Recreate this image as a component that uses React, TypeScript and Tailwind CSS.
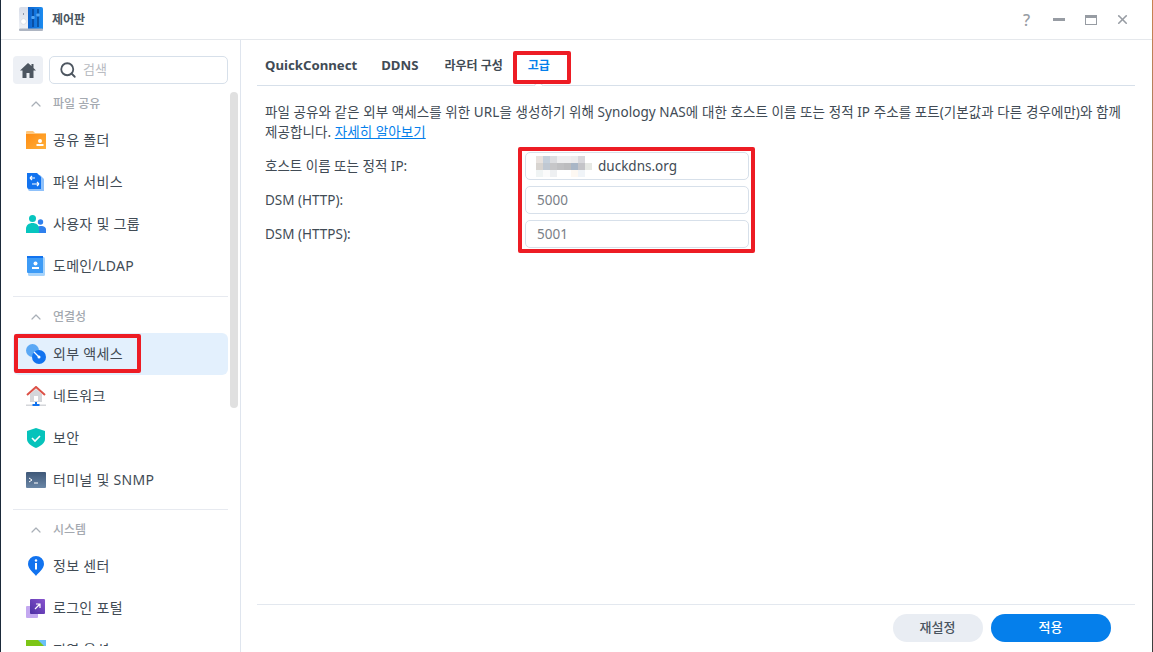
import { Search, ChevronUp, X } from "lucide-react";
import type { ReactNode } from "react";

const FONT = "font-['Noto_Sans','Noto_Sans_CJK_KR',sans-serif]";

// the hostname is pixelated in the picture
const MOSAIC = [
  ["#e8e2de", "#c5d0dc", "#dcdde0", "#eeeeef", "#eeeeef", "#ebebec", "#d8d8dc", "#ffffff"],
  ["#d8d4d0", "#c0c8d2", "#c6c6c8", "#c0c0c2", "#bcbcbe", "#a9b6c6", "#c4c4c8", "#e6e8e4"],
  ["#f0f4f4", "#fbfbfb", "#eef0f2", "#ffffff", "#ffffff", "#fdf8f2", "#f0f4f8", "#ffffff"],
];

function Box({ className }: { className: string }) {
  return <div className={`rounded-[2px] border-4 border-[#ed1c24] ${className}`} />;
}

const FolderIcon = () => (
  <svg width="20" height="18" viewBox="0 0 20 18">
    <defs>
      <linearGradient id="fold" x1="0" y1="0" x2="1" y2="1">
        <stop offset="0" stopColor="#ff8c12" />
        <stop offset="1" stopColor="#ffb03a" />
      </linearGradient>
    </defs>
    <path d="M0 1a1 1 0 0 1 1-1h6l2 2h11v2H0z" fill="#ffc87e" />
    <rect y="3" width="20" height="15" fill="url(#fold)" />
    <circle cx="14" cy="10" r="2" fill="#fff" />
    <rect x="10.500" y="13" width="7" height="2" fill="#fff" />
  </svg>
);

const FileServiceIcon = () => (
  <svg width="20" height="20" viewBox="0 0 20 20">
    <path d="M2 3h12l4 4v12H4a2 2 0 0 1-2-2z" fill="#8fc1fa" />
    <path d="M1 1h10l4 4v12H3a2 2 0 0 1-2-2z" fill="#1273ef" />
    <path d="M9 6H4M4 6l2-2M4 6l2 2M6 12h7M13 12l-2-2M13 12l-2 2" stroke="#fff" strokeWidth="1.200" fill="none" />
  </svg>
);

const UsersIcon = () => (
  <svg width="20" height="18" viewBox="0 0 20 18">
    <circle cx="14.500" cy="7" r="2.700" fill="#2f80ed" />
    <path d="M10 18v-3c0-3 2-4 5-4s5 1 5 4v3z" fill="#2f80ed" />
    <circle cx="6.500" cy="3.500" r="3.500" fill="#07c5bf" />
    <path d="M0 18v-4c0-4 3-6 6.500-6s6.500 2 6.500 6v4z" fill="#07c5bf" />
  </svg>
);

const DomainIcon = () => (
  <svg width="18" height="20" viewBox="0 0 18 20">
    <rect x="1" y="1" width="17" height="19" rx="1.500" fill="#a6d3fb" />
    <path d="M0 1a1 1 0 0 1 1-1h15v17H1a1 1 0 0 1-1-1z" fill="#3d9bf6" />
    <rect y="0" width="16" height="2" fill="#1273ef" />
    <circle cx="8.500" cy="7.500" r="2" fill="#fff" />
    <rect x="5" y="11" width="7" height="2" fill="#fff" />
  </svg>
);

const ExternalIcon = () => (
  <svg width="20" height="20" viewBox="0 0 20 20">
    <circle cx="6.500" cy="6.500" r="6.500" fill="#5aa8f5" />
    <circle cx="13" cy="13" r="7" fill="#1273ef" />
    <path d="M8 8l5 5" stroke="#fff" strokeWidth="1.300" />
    <circle cx="13" cy="13" r="1.500" fill="#fff" />
  </svg>
);

const NetworkIcon = () => (
  <svg width="20" height="21" viewBox="0 0 20 21">
    <path d="M4 8l6-5 6 5v8H4z" fill="#d4d6da" />
    <path d="M1 9l9-8 9 8" stroke="#dc5147" strokeWidth="2" fill="none" />
    <rect x="8" y="10" width="4" height="5" fill="#fff" />
    <rect x="0" y="18.500" width="20" height="1.500" fill="#d4d6da" />
    <rect x="9" y="16" width="2" height="3" fill="#1273ef" />
    <rect x="6.500" y="18" width="7" height="2" fill="#1273ef" />
  </svg>
);

const ShieldIcon = () => (
  <svg width="18" height="20" viewBox="0 0 18 20">
    <path d="M9 0l9 3v8c0 4-4 7-9 9-5-2-9-5-9-9V3z" fill="#06c3bb" />
    <path d="M5 10l3 3 5-5" stroke="#fff" strokeWidth="1.600" fill="none" />
  </svg>
);

const TerminalIcon = () => (
  <svg width="20" height="16" viewBox="0 0 20 16">
    <defs>
      <linearGradient id="term" x1="0" y1="0" x2="0" y2="1">
        <stop offset="0" stopColor="#3f5878" />
        <stop offset="1" stopColor="#6a86a6" />
      </linearGradient>
    </defs>
    <rect width="20" height="16" rx="1" fill="url(#term)" />
    <path d="M3 6l3 2-3 2M8 11h4" stroke="#fff" strokeWidth="1" fill="none" />
  </svg>
);

const InfoIcon = () => (
  <svg width="16" height="20" viewBox="0 0 16 20">
    <path d="M8 20C6 17 0 13 0 8a8 8 0 0 1 16 0c0 5-6 9-8 12z" fill="#1273ef" />
    <circle cx="8" cy="4.500" r="1.200" fill="#fff" />
    <rect x="7" y="7" width="2" height="6.500" fill="#fff" />
  </svg>
);

const PortalIcon = () => (
  <svg width="20" height="19" viewBox="0 0 20 19">
    <defs>
      <linearGradient id="portal" x1="0" y1="1" x2="1" y2="0">
        <stop offset="0" stopColor="#4b2ea3" />
        <stop offset="1" stopColor="#8a55cf" />
      </linearGradient>
    </defs>
    <rect x="0" y="7" width="12" height="12" rx="1" fill="#c3a8f0" />
    <rect x="4" y="0" width="15" height="15" rx="1" fill="url(#portal)" />
    <path d="M9 10l5-5M10 5h4v4" stroke="#fff" strokeWidth="1.200" fill="none" />
  </svg>
);

const RegionIcon = () => (
  <svg width="20" height="20" viewBox="0 0 20 20">
    <rect width="20" height="20" fill="#7cc516" />
    <path d="M12 0h8v8z" fill="#6cc0f7" />
  </svg>
);

const ControlPanelIcon = () => (
  <svg className="mb-[2px]" width="24" height="24" viewBox="0 0 24 24">
    <defs>
      <linearGradient id="cpBlue" x1="0" y1="0" x2="1" y2="0">
        <stop offset="0" stopColor="#0b63cf" />
        <stop offset="1" stopColor="#1c8cf0" />
      </linearGradient>
      <linearGradient id="cpGray" x1="0" y1="0" x2="0" y2="1">
        <stop offset="0" stopColor="#d8dde9" />
        <stop offset="1" stopColor="#f0f2f6" />
      </linearGradient>
    </defs>
    <rect width="24" height="22" rx="2" fill="url(#cpGray)" />
    <path d="M9 0h13a2 2 0 0 1 2 2v20H9z" fill="url(#cpBlue)" />
    <rect y="21.500" width="24" height="2.500" rx="1" fill="#aeb5c2" />
    <circle cx="4.500" cy="14.500" r="2.800" fill="#fff" stroke="#c6ccd6" strokeWidth="0.500" />
    <rect x="4" y="6" width="1" height="2" fill="#8f98a8" />
    <path d="M14 2v18M19 2v18" stroke="#063a80" strokeWidth="1.200" />
    <rect x="12.300" y="9" width="3.400" height="3" rx="1" fill="#55a6f2" />
    <rect x="17.300" y="6.500" width="3.400" height="3" rx="1" fill="#55a6f2" />
  </svg>
);

function NavItem({ icon, label, active }: { icon: ReactNode; label: string; active?: boolean }) {
  return (
    <div className={`flex h-[42px] shrink-0 items-center rounded-[6px] pl-[13px] ${active ? "bg-[#e3f0fd]" : ""}`}>
      <span className="flex w-5 justify-center">{icon}</span>
      <span className="ml-[7px] pb-[2px] text-[14px] tracking-[0.3px] text-[#414b55]">{label}</span>
    </div>
  );
}

function SectionTitle({ label }: { label: string }) {
  return (
    <div className="flex h-[20px] items-center pl-[15px]">
      <ChevronUp size={16} strokeWidth={1.8} className="text-[#a9afb7]" />
      <span className="ml-[9px] text-[12px] font-medium text-[#a4a9b0]">{label}</span>
    </div>
  );
}

function Field({ label, children }: { label: string; children: ReactNode }) {
  return (
    <div className="flex h-[28px] items-center">
      <span className="w-[260px] text-[13.5px] text-[#414b55]">{label}</span>
      <div className="flex h-[28px] w-[224px] items-center rounded-[5px] border border-[#d7e0ea] px-[11px] text-[13.5px]">
        {children}
      </div>
    </div>
  );
}

export default function App() {
  return (
    <div className={`flex h-[652px] w-[1153px] overflow-hidden bg-white ${FONT}`}>
      <div className="w-px shrink-0 bg-[#1b2a3a]" />
      <div className="flex min-w-0 flex-1 flex-col">
        <header className="flex h-10 shrink-0 items-center border-b border-[#e5e8ec] pl-[18px] pr-[22px]">
          <ControlPanelIcon />
          <span className="ml-[9px] text-[12px] font-bold text-[#4a5560]">제어판</span>
          <div className="ml-auto flex items-center text-[#979ca3]">
            <span className="w-3 text-center text-[16px] font-medium leading-none">?</span>
            <span className="ml-[20px] h-[2.500px] w-3 bg-current" />
            <svg className="ml-[20px]" width="12" height="10" viewBox="0 0 12 10">
              <rect x="0.500" y="0.500" width="11" height="9" fill="none" stroke="currentColor" />
              <rect width="12" height="3" fill="currentColor" />
            </svg>
            <X className="ml-[18px]" size={15} strokeWidth={2.6} />
          </div>
        </header>

        <div className="flex min-h-0 flex-1">
          <aside className="relative flex w-[240px] shrink-0 flex-col border-r border-[#dfe5ee] px-3 pb-[6px]">
            <div className="mt-4 flex h-[28px] shrink-0 items-center gap-[6px]">
              <div className="flex h-[28px] w-[30px] items-center justify-center rounded-[4px] bg-[#edf0f5]">
                <svg width="16" height="15" viewBox="0 0 16 15">
                  <path d="M8 0L0 7.500h2.500V15h4v-5h3v5h4V7.500H16L13.500 5V1h-2v2z" fill="#4d5660" />
                </svg>
              </div>
              <div className="flex h-[28px] flex-1 items-center rounded-[5px] border border-[#d7e0ea] pl-[9px]">
                <Search size={18} strokeWidth={2.4} className="text-[#4d5660]" />
                <span className="ml-[6px] text-[13px] text-[#b9bcc2]">검색</span>
              </div>
            </div>

            <nav className="mt-[11px] flex min-h-0 w-[215px] flex-1 flex-col overflow-hidden">
              <SectionTitle label="파일 공유" />
              <div className="mt-[6px]">
                <NavItem icon={<FolderIcon />} label="공유 폴더" />
                <NavItem icon={<FileServiceIcon />} label="파일 서비스" />
                <NavItem icon={<UsersIcon />} label="사용자 및 그룹" />
                <NavItem icon={<DomainIcon />} label="도메인/LDAP" />
              </div>
              <div className="mt-[9px] h-px shrink-0 bg-[#e7eaf0]" />
              <div className="mt-[10px]"><SectionTitle label="연결성" /></div>
              <div className="mt-[6px]">
                <NavItem icon={<ExternalIcon />} label="외부 액세스" active />
                <NavItem icon={<NetworkIcon />} label="네트워크" />
                <NavItem icon={<ShieldIcon />} label="보안" />
                <NavItem icon={<TerminalIcon />} label="터미널 및 SNMP" />
              </div>
              <div className="mt-[8px] h-px shrink-0 bg-[#e7eaf0]" />
              <div className="mt-[10px]"><SectionTitle label="시스템" /></div>
              <div className="mt-[5px]">
                <NavItem icon={<InfoIcon />} label="정보 센터" />
                <NavItem icon={<PortalIcon />} label="로그인 포털" />
                <NavItem icon={<RegionIcon />} label="지역 옵션" />
              </div>
            </nav>

            <div className="absolute left-[229px] top-[52px] h-[316px] w-2 rounded-full bg-[#e0e0e0]" />
            <Box className="absolute left-[13px] top-[294px] h-[39px] w-[127px]" />
          </aside>

          <main className="relative flex min-w-0 flex-1 flex-col pl-[16px] pr-[17px]">
            <div className="relative flex h-[46px] shrink-0 items-center border-b border-[#d7e0ea] pl-[8px] pt-[7px] text-[13.2px] font-bold text-[#414b55]">
              <span>QuickConnect</span>
              <span className="ml-[24px]">DDNS</span>
              <span className="ml-[26px] text-[12px]">라우터 구성</span>
              <span className="ml-[25px] text-[12px] text-[#057feb]">고급</span>
              <div className="absolute bottom-[-4px] left-[278px] size-[7px] rotate-45 border-l border-t border-[#d7e0ea] bg-white" />
            </div>

            <div className="pl-[8px] pt-[16px]">
              <p className="text-[13.5px] leading-[20px] tracking-[0.07px] text-[#414b55]">
                파일 공유와 같은 외부 액세스를 위한 URL을 생성하기 위해 Synology NAS에 대한 호스트 이름 또는 정적 IP 주소를 포트(기본값과 다른 경우에만)와 함께
                <br />
                제공합니다. <span className="text-[#057feb] underline">자세히 알아보기</span>
              </p>
              <div className="mt-[10px] flex flex-col gap-[6px]">
                <Field label="호스트 이름 또는 정적 IP:">
                  <svg className="-ml-px shrink-0" width="62" height="21" viewBox="0 0 62 21">
                    {MOSAIC.map((row, y) =>
                      row.map((fill, x) => (
                        <rect key={`${x}-${y}`} x={x * 7} y={y * 7} width="7" height="7" fill={fill} />
                      )),
                    )}
                  </svg>
                  <span className="text-[#414b55]">duckdns.org</span>
                </Field>
                <Field label="DSM (HTTP):"><span className="text-[#7a8087]">5000</span></Field>
                <Field label="DSM (HTTPS):"><span className="text-[#7a8087]">5001</span></Field>
              </div>
            </div>

            <footer className="mt-auto flex h-[48px] shrink-0 items-center justify-end gap-2 border-t border-[#e3e8ef] pb-[2px] pr-[24px]">
              <button className="h-[28px] w-[90px] rounded-full bg-[#e9edf3] text-[13px] font-medium text-[#4a5560]">재설정</button>
              <button className="h-[28px] w-[120px] rounded-full bg-[#057feb] text-[13px] font-medium text-white">적용</button>
            </footer>

            <Box className="absolute left-[272px] top-[11px] h-[33px] w-[58px]" />
            <Box className="absolute left-[277px] top-[107px] h-[106px] w-[237px]" />
          </main>
        </div>
      </div>
      <div className="w-[1.500px] shrink-0 bg-gradient-to-b from-[#c9824f] via-[#7f7a72] to-[#3d3d3d]" />
    </div>
  );
}
